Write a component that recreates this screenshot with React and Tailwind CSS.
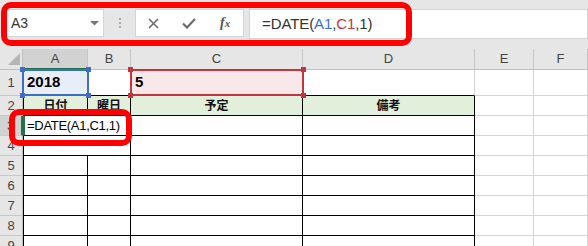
import React from "react";

const COL_LABELS = ["", "A", "B", "C", "D", "E", "F"];
const ROWS = 10;
const TABLE_HEAD = { 1: "日付", 2: "曜日", 3: "予定", 4: "備考" };

function Corners({ color }) {
  return (
    <>
      <span className={`absolute -left-[3px] -top-[3px] w-[5px] h-[5px] ${color}`} />
      <span className={`absolute -right-[3px] -top-[3px] w-[5px] h-[5px] ${color}`} />
      <span className={`absolute -left-[3px] -bottom-[3px] w-[5px] h-[5px] ${color}`} />
      <span className={`absolute -right-[3px] -bottom-[3px] w-[5px] h-[5px] ${color}`} />
    </>
  );
}

function HeaderCell({ c }) {
  if (c === 0) {
    return (
      <div className="bg-[#e6e6e6] border-r border-b border-[#bfbfbf]">
        <svg width="23" height="21" viewBox="0 0 23 21">
          <polygon points="20,4 20,16 8,16" fill="#b5b5b5" />
        </svg>
      </div>
    );
  }
  const selected = c === 1;
  return (
    <div
      className={`flex items-center justify-center text-[13px] text-[#444] border-r border-[#c6c6c6] ${
        selected ? "bg-[#d2d2d2] border-b-2 border-b-[#217346]" : "bg-[#e6e6e6] border-b border-b-[#bfbfbf]"
      }`}
    >
      {COL_LABELS[c]}
    </div>
  );
}

function RowHeader({ r }) {
  const selected = r === 3;
  return (
    <div
      className={`flex items-center justify-center text-[13px] text-[#444] border-b border-[#c8c8c8] ${
        selected ? "bg-[#d2d2d2] border-r-2 border-r-[#217346]" : "bg-[#e6e6e6] border-r border-r-[#bfbfbf]"
      }`}
    >
      {r}
    </div>
  );
}

function BodyCell({ r, c }) {
  // row 1: values with reference highlights
  if (r === 1) {
    if (c === 1) {
      return (
        <div className="relative bg-[#e8eef8] border-b border-black flex items-center pl-[4px] text-[15px] font-bold text-black">
          2018
          <div className="absolute -left-px -top-px -right-px -bottom-px border-2 border-[#3c6fc3]" />
          <Corners color="bg-[#3c6fc3]" />
        </div>
      );
    }
    if (c === 3) {
      return (
        <div className="relative bg-[#f8e8e9] border-b border-black flex items-center pl-[4px] text-[15px] font-bold text-black">
          5
          <div className="absolute -left-px -top-px -right-px -bottom-px border-2 border-[#c0363f]" />
          <Corners color="bg-[#c0363f]" />
        </div>
      );
    }
    if (c === 2 || c === 4) {
      return <div className="border-r border-r-[#d4d4d4] border-b border-b-black" />;
    }
    return <div className="border-r border-b border-[#d4d4d4]" />;
  }

  if (c >= 5) {
    return <div className="border-r border-b border-[#d4d4d4]" />;
  }

  // table header row
  if (r === 2) {
    return (
      <div
        className={`bg-[#e2efda] flex items-center justify-center text-[12px] font-bold text-[#111] border-r border-b border-black ${
          c === 1 ? "border-l" : ""
        }`}
      >
        {TABLE_HEAD[c]}
      </div>
    );
  }

  // active cell in edit mode
  if (r === 3 && c === 1) {
    return (
      <div className="relative z-10 border-l-2 border-l-[#217346] border-b border-b-black flex items-center pl-[2px] whitespace-nowrap text-[13px] tracking-[-0.3px] text-black">
        =DATE(A1,C1,1)
      </div>
    );
  }

  const noRight = c === 1 && r === 4;
  return (
    <div
      className={`border-b border-black ${noRight ? "" : "border-r"} ${c === 1 ? "border-l" : ""}`}
    />
  );
}

export default function App() {
  const cells = [];
  for (let r = 0; r < ROWS; r++) {
    for (let c = 0; c < 7; c++) {
      const key = `${r}-${c}`;
      if (r === 0) cells.push(<HeaderCell key={key} c={c} />);
      else if (c === 0) cells.push(<RowHeader key={key} r={r} />);
      else cells.push(<BodyCell key={key} r={r} c={c} />);
    }
  }

  return (
    <div className="relative w-[588px] h-[246px] overflow-hidden bg-white font-['Liberation_Sans','Noto_Sans_CJK_JP',sans-serif]">
      {/* formula bar */}
      <div className="flex items-start h-[49px] bg-[#e6e6e6] pt-[9px] pl-[5px]">
        <div className="w-[99px] h-[28px] bg-white border border-[#d4d4d4] flex items-center justify-between pl-[5px] pr-[4px]">
          <span className="text-[14px] text-[#333]">A3</span>
          <svg width="9" height="5" viewBox="0 0 9 5">
            <polygon points="0,0 9,0 4.5,4.5" fill="#777" />
          </svg>
        </div>
        <div className="w-[31px] h-[28px] flex flex-col items-center justify-center gap-[2px]">
          <span className="w-[2px] h-[2px] bg-[#aaa]" />
          <span className="w-[2px] h-[2px] bg-[#aaa]" />
          <span className="w-[2px] h-[2px] bg-[#aaa]" />
        </div>
        <div className="w-[109px] h-[28px] bg-white border border-[#d4d4d4] grid grid-cols-3 items-center justify-items-center">
          <svg width="11" height="11" viewBox="0 0 11 11">
            <path d="M1 1L10 10M10 1L1 10" stroke="#6b6b6b" strokeWidth="1.6" fill="none" />
          </svg>
          <svg width="14" height="11" viewBox="0 0 14 11">
            <path d="M1 5.5L5 9.5L13 1" stroke="#6b6b6b" strokeWidth="2.2" fill="none" />
          </svg>
          <span className="font-['Liberation_Serif',serif] italic font-bold text-[14px] text-[#555] leading-none">
            f<span className="text-[11px]">x</span>
          </span>
        </div>
        <div className="ml-[5px] flex-1 h-[30px] bg-white border border-[#d4d4d4] flex items-center pl-[12px] text-[15px] text-[#333] tracking-[-0.1px]">
          =DATE(<span className="text-[#3c6fc3]">A1</span>,<span className="text-[#c0363f]">C1</span>,1)
        </div>
      </div>

      {/* sheet grid */}
      <div className="grid grid-cols-[23px_65px_43px_172px_172px_59px_54px] grid-rows-[21px_26px_repeat(8,20px)]">
        {cells}
      </div>

      {/* red annotation boxes */}
      <div className="absolute left-[1px] top-[2px] w-[411px] h-[44px] border-[6px] border-[#fe0000] rounded-[10px]" />
      <div className="absolute left-[9px] top-[109px] w-[123px] h-[37px] border-[6px] border-[#fe0000] rounded-[10px] z-20" />
    </div>
  );
}
